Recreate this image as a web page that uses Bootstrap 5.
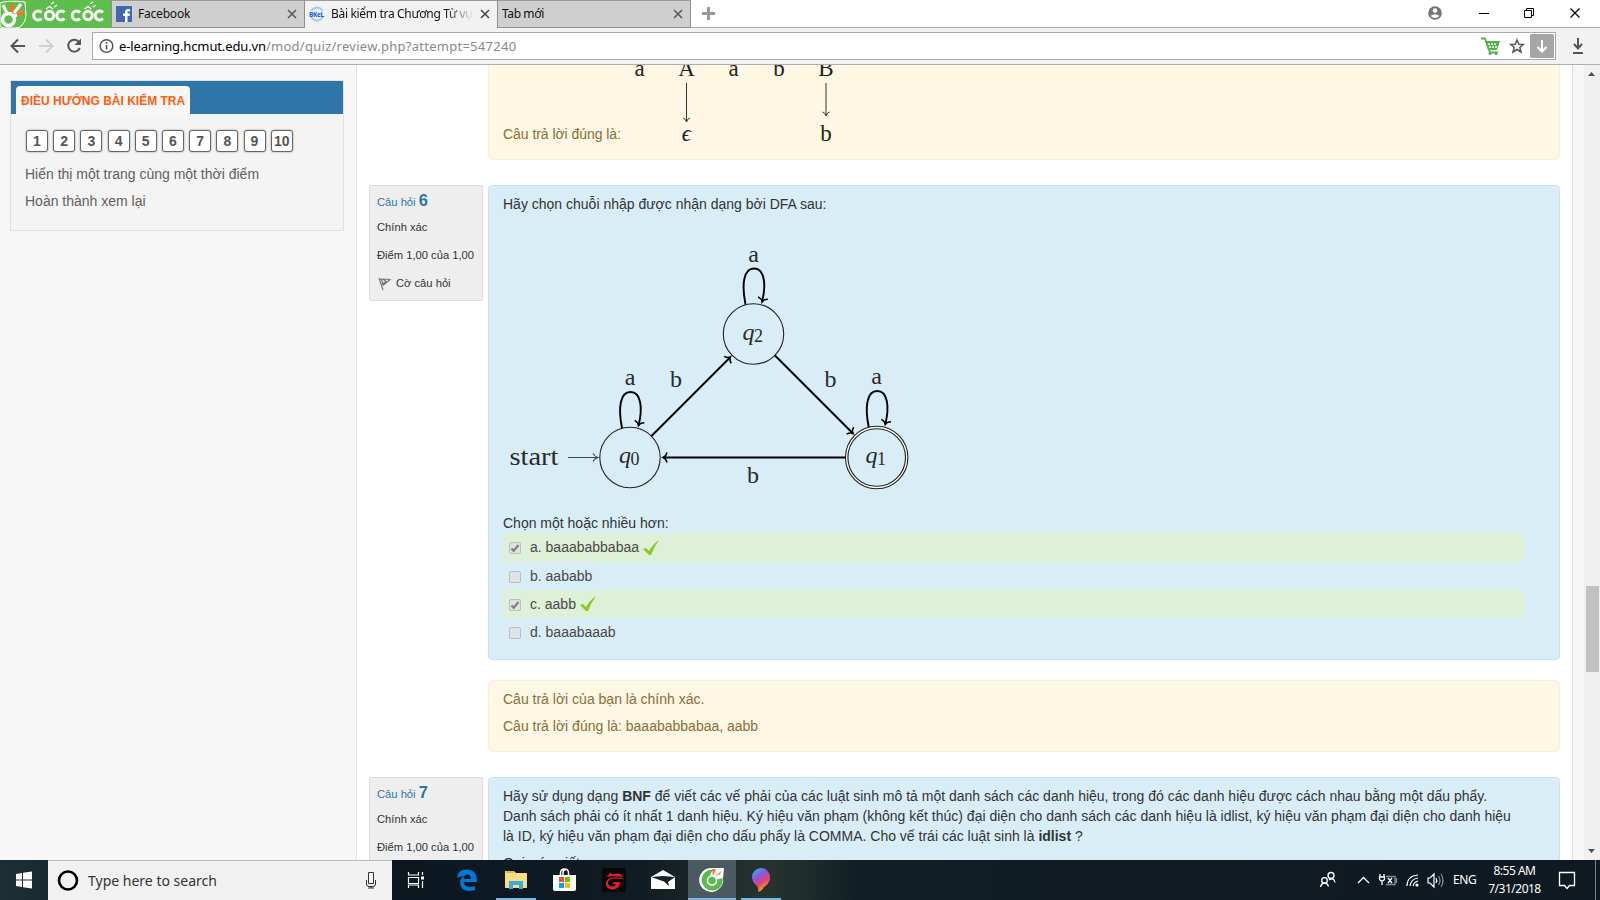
<!DOCTYPE html>
<html lang="vi">
<head>
<meta charset="utf-8">
<title>Bài kiểm tra Chương Từ vựng</title>
<link href="https://cdn.jsdelivr.net/npm/bootstrap@5.3.0/dist/css/bootstrap.min.css" rel="stylesheet">
<style>
body{width:1600px;height:900px;overflow:hidden;font:14px/20px "Liberation Sans",Arial,sans-serif;color:#333;background:#f7f7f7}
svg{display:block;flex:none}
.ui{font-family:"Noto Sans","Open Sans",sans-serif}
.tabstrip{height:28px;background:#fff;border-bottom:1px solid #b0b0b0}
.brand{width:111px;height:28px;background:#5fbd4d}
.btab{height:28px;background:#cfcfcf;border:1px solid #8e8e8e;border-top-color:#9a9a9a;font-size:12px;line-height:26px;color:#111;padding:0 5px 0 4px;letter-spacing:-.2px}
.btab.on{background:#f2f2f2;border-bottom-color:#f2f2f2;border-right:0;border-left:0}
.fade-end{-webkit-mask-image:linear-gradient(90deg,#000 80%,transparent);mask-image:linear-gradient(90deg,#000 80%,transparent)}
.toolbar{height:37px;background:#f2f2f2;border-bottom:1px solid #b0b0b0}
.urlbar{width:1464px;height:28px;background:#fff;border:1px solid #a9a9a9;font-size:13px}
.viewport{height:795px}
.side{width:356px;padding:15px 12px 0 10px}
.block{width:334px;height:151px;border:1px solid #e1e1e1;background:#f4f4f4}
.block-head{height:33px;background:#2e76a9;padding:5px 0 0 5px}
.block-tab{width:174px;height:28px;border-radius:4px 4px 0 0;background:#f7f7f7;color:#ff5d10;font-weight:bold;font-size:12px;line-height:30px;padding-left:5px;white-space:nowrap}
.qn{width:22px;height:22px;border:1px solid #666;border-radius:3px;background:#fff;color:#555;font-weight:bold;line-height:20px;box-shadow:0 0 2px #888}
.gray{color:#606060}
.main-col{width:1217px;border-left:1px solid #e1e1e1;border-right:1px solid #ddd;background:#fff;padding:0 11px 0 12px}
.info{width:114px;height:116px;border:1px solid #dcdcdc;border-radius:2px;background:#eee;font-size:11.2px;line-height:16px;padding:6px 0 0 7px;white-space:nowrap}
.info b{font-size:16.5px;line-height:16px}
.info .lnk{color:#2f75a9;height:18px}
.q,.fb{width:1072px;border:1px solid #bce8f1;border-radius:4px;background:#d9edf7;padding:8px 14px 0}
.fb{border-color:#fbeed5;background:#fdf7e4;color:#8a6d3b;margin-left:119px}
.ans{height:28px;width:1021px;padding-left:6px;color:#484848}
.ans.ok{background:#dff0d8}
.cb{width:12px;height:12px;border:1px solid #b9bfc2;border-radius:2px;background:#dde4e8;margin-right:9px;margin-top:1px}
.ok .cb{background:#dfe5dc}
.sbar{width:16px;background:#f0f0f0}
.thumb{width:13px;height:86px;background:#c1c1c1;margin:0 0 0 2px}
.taskbar{height:40px;background:linear-gradient(90deg,#1d2f34 0,#182a30 50px,#0b1822 390px,#101b23 640px,#26342f 770px,#111f25 860px,#101b22 1100px,#0e1921 1600px);color:#fff}
.search{width:344px;height:40px;background:#f1f1f1;color:#333;font-size:14px;border-top:1px solid #bbb}
.app{width:48px;height:40px;border-bottom:2px solid transparent}
.app.run{width:40px;margin:0 4px;border-color:#76b9ed}
.app.cur{background:#4b5a5f;border-color:#76b9ed}
</style>
</head>
<body class="d-flex flex-column">
<header class="ui">
 <div class="tabstrip d-flex">
  <div class="brand"><svg width="111" height="28"><path d="M0 3Q9 0 25 2L26 16Q24 28 15 28L4 28Q0 28 0 25Z" fill="none" stroke="#fff"/><circle cx="8.500" cy="19.500" r="6" fill="none" stroke="#fff" stroke-width="3.400"/><path d="M3 5l4 8" stroke="#fff" stroke-width="3"/><path d="M13 4l-2 8" stroke="#ff6f20" stroke-width="3.500"/><path d="M21 4l-7 9M23 12l-8 4" stroke="#fff" stroke-width="3"/><path d="M17 15l7-3" stroke="#ff6f20" stroke-width="3"/><g fill="none" stroke="#fff" stroke-width="2.900"><path d="M41.500 12.500a4.500 4.500 0 1 0 0 6M80 12.500a4.500 4.500 0 1 0 0 6M64.500 12.500a4.500 4.500 0 1 0 0 6M103 12.500a4.500 4.500 0 1 0 0 6"/><circle cx="49.500" cy="15.500" r="4.200"/><circle cx="88" cy="15.500" r="4.200"/></g><path d="M46 9l3.500-2.500L53 9M84.500 9L88 6.500 91.500 9M51 4l3-2M54 7l3-2M90 4l3-2M93 7l3-2" fill="none" stroke="#fff" stroke-width="1.300"/></svg></div>
  <div class="btab d-flex align-items-center" style="width:194px"><svg width="16" height="16" style="margin-right:6px"><rect width="16" height="16" fill="#4267b2"/><path d="M9 16V10H7V7.500h2V6Q9 3 12 3h2v2.400h-1.500q-1 0-1 1v1.100H14L13.600 10h-2.100v6z" fill="#fff"/></svg><span class="flex-fill ps-0">Facebook</span><svg width="14" height="14"><path d="M3 3l8 8M11 3l-8 8" stroke="#555" stroke-width="1.500"/></svg></div>
  <div class="btab on d-flex align-items-center" style="width:192px"><svg width="16" height="16" class="me-1"><circle cx="8" cy="8" r="6.500" fill="none" stroke="#a8c7f5" stroke-width="2"/><rect y="5" width="16" height="6" fill="#f2f2f2"/><text x="0" y="10.500" font-size="6.500" font-weight="bold" fill="#1955e8" textLength="15">BKeL</text></svg><span class="flex-fill overflow-hidden text-nowrap fade-end" style="width:144px;margin-left:2px;letter-spacing:-.32px">Bài kiểm tra Chương Từ vựng</span><svg width="14" height="14" class="ms-1"><path d="M3 3l8 8M11 3l-8 8" stroke="#444" stroke-width="1.500"/></svg></div>
  <div class="btab d-flex align-items-center" style="width:194px;letter-spacing:-.4px"><span class="flex-fill">Tab mới</span><svg width="14" height="14"><path d="M3 3l8 8M11 3l-8 8" stroke="#555" stroke-width="1.500"/></svg></div>
  <svg width="36" height="27"><path d="M11 13.500h13M17.500 7v13" stroke="#999" stroke-width="3"/></svg>
  <svg width="180" height="27" class="ms-auto"><circle cx="15" cy="13" r="6.800" fill="#757575"/><circle cx="15" cy="10.500" r="2.300" fill="#fff"/><path d="M10.500 16q4.500-3.500 9 0q-4.500 4-9 0" fill="#fff"/><path d="M59 13.500h10" stroke="#000"/><path d="M104.500 10.500h7v7h-7zM106.500 10.500v-2h7v7h-2" fill="none" stroke="#000"/><path d="M150.500 8.500l9 9M159.500 8.500l-9 9" stroke="#000" stroke-width="1.200"/></svg>
 </div>
 <div class="toolbar d-flex align-items-center">
  <svg width="92" height="36"><path d="M25 18H12M18 11.500L11.500 18l6.500 6.500" fill="none" stroke="#555" stroke-width="2"/><path d="M39 18H52M46 11.500l6.500 6.500-6.500 6.500" fill="none" stroke="#d0d0d0" stroke-width="2"/><path d="M79 14a6 6 0 1 0 .800 6" fill="none" stroke="#555" stroke-width="2"/><path d="M81 10.500v6.500h-6.500z" fill="#555"/></svg>
  <div class="urlbar d-flex align-items-center"><svg width="26" height="26"><circle cx="13.500" cy="13" r="6.300" fill="none" stroke="#555" stroke-width="1.500"/><path d="M13.500 12v4.500M13.500 9v1.700" stroke="#555" stroke-width="1.600"/></svg><span class="text-black" style="letter-spacing:-.13px">e-learning.hcmut.edu.vn<span style="color:#888;letter-spacing:.27px">/mod/quiz/review.php?attempt=547240</span></span>
   <svg width="80" height="26" class="ms-auto"><path d="M6 5.500h4l5 14h8" fill="none" stroke="#55b14b" stroke-width="1.800"/><path d="M10 8h15l-3 9h-9z" fill="#55b14b"/><path d="M13 11.300h9M14 14h8" stroke="#fff" stroke-width="1.400" stroke-dasharray="2 1"/><circle cx="15" cy="20.500" r="1.500" fill="#55b14b"/><circle cx="21" cy="20.500" r="1.500" fill="#55b14b"/><path d="M42 7l1.800 4.200 4.500.300-3.500 3 1.200 4.500-4-2.500-4 2.500 1.200-4.500-3.500-3 4.500-.300z" fill="none" stroke="#555" stroke-width="1.500"/><rect x="55" y="1" width="24" height="24" rx="1.500" fill="#a6a6a6"/><path d="M67 7v11M62.500 14l4.500 4.500L71.500 14" fill="none" stroke="#fff" stroke-width="2"/></svg></div>
  <svg width="40" height="36"><path d="M22 10v10M18 16l4 4.500 4-4.500M17 25h10" fill="none" stroke="#555" stroke-width="2"/></svg>
 </div>
</header>
<div class="viewport d-flex overflow-hidden">
 <aside class="side">
  <div class="block">
   <div class="block-head"><div class="block-tab">ĐIỀU HƯỚNG BÀI KIỂM TRA</div></div>
   <div class="d-flex text-center" style="padding:16px 0 0 15px;gap:5.2px"><div class="qn">1</div><div class="qn">2</div><div class="qn">3</div><div class="qn">4</div><div class="qn">5</div><div class="qn">6</div><div class="qn">7</div><div class="qn">8</div><div class="qn">9</div><div class="qn">10</div></div>
   <div class="gray" style="padding:12px 0 0 14px">Hiển thị một trang cùng một thời điểm<div style="margin-top:7px">Hoàn thành xem lại</div></div>
  </div>
 </aside>
 <main class="main-col">
  <div class="fb rounded-top-0 border-top-0 pt-0" style="height:95px;margin-bottom:25px">
   <svg width="400" height="94" viewBox="503 65 400 94" font-family="Liberation Serif" font-size="23" fill="#222" text-anchor="middle"><text x="639.500" y="75.500">a</text><text x="686.500" y="75.500">A</text><text x="733.500" y="75.500">a</text><text x="779" y="75.500">b</text><text x="826" y="75.500">B</text><text x="686.500" y="141" font-style="italic">ϵ</text><text x="826" y="141">b</text><path d="M686.500 83v38M683 118q3 1 3.500 4q.5-3 3.500-4M826 83v32M822.500 112q3 1 3.500 4q.5-3 3.500-4" fill="none" stroke="#333"/><text x="503" y="139" font-family="Liberation Sans" font-size="14" fill="#8a6d3b" text-anchor="start" textLength="118">Câu trả lời đúng là:</text></svg>
  </div>
  <section class="d-flex align-items-start" style="gap:5px;height:495px">
   <div class="info"><div class="lnk">Câu hỏi <b>6</b></div><div style="margin-top:9px">Chính xác</div><div style="margin-top:12px">Điểm 1,00 của 1,00</div><div class="d-flex" style="margin-top:12px"><svg width="19" height="16"><path d="M2 3l4 12M3 4l10 .500-7 6M4.500 4l1.500 6M6 4l3 2.500-4 3" fill="none" stroke="#777" stroke-width="1.200"/></svg>Cờ câu hỏi</div></div>
   <div class="q" style="height:475px"><div>Hãy chọn chuỗi nhập được nhận dạng bởi DFA sau:</div>
    <svg width="440" height="299" viewBox="503 214 440 299" font-family="Liberation Serif" font-size="24" fill="#2a2a2a" text-anchor="middle">
     <defs><marker id="ah" viewBox="-6 -6 8 12" markerWidth="8" markerHeight="12" markerUnits="userSpaceOnUse" orient="auto"><path d="M-4 -5Q-3 -1 0 0Q-3 1 -4 5" fill="none" stroke="#000" stroke-width="1.500"/></marker></defs>
     <g fill="none" stroke="#222" stroke-width="1.100"><circle cx="753.500" cy="334" r="30.200"/><circle cx="630" cy="457.500" r="30.200"/><circle cx="876.700" cy="457.500" r="30" stroke="#fff" stroke-width="1.800"/><circle cx="876.700" cy="457.500" r="31.200"/><circle cx="876.700" cy="457.500" r="28.800"/><path d="M568 457.500h29M593 453.500q1.500 3 5 4q-3.500 1-5 4" stroke="#444"/></g>
     <g fill="none" stroke="#000" stroke-width="1.900"><path d="M651.500 436L730.500 357" marker-end="url(#ah)"/><path d="M775 355.500L853 433.500" marker-end="url(#ah)"/><path d="M845.500 457.500H663" marker-end="url(#ah)"/><path id="loop" d="M622 428C618 408 620 392 630.500 392C641 392 643 408 638.500 425.500" marker-end="url(#ah)"/><use href="#loop" x="123.500" y="-123.500"/><use href="#loop" x="246.700" y="-1"/></g>
     <text x="753.500" y="261.500">a</text><text x="630" y="384.500">a</text><text x="876.700" y="383.500">a</text><text x="676" y="387">b</text><text x="830.500" y="387">b</text><text x="753" y="483">b</text><text x="534" y="465" font-size="25.500" textLength="49" lengthAdjust="spacingAndGlyphs">start</text>
     <text x="748.500" y="340" font-style="italic">q</text><text x="758.500" y="341.500" font-size="18">2</text>
     <text x="625" y="463" font-style="italic">q</text><text x="635" y="464.500" font-size="18">0</text><text x="871.500" y="463" font-style="italic">q</text><text x="881.500" y="464.500" font-size="18">1</text>
    </svg>
    <div>Chọn một hoặc nhiều hơn:</div>
    <div class="ans ok d-flex align-items-center" style="height:29px"><span class="cb"><svg width="10" height="10"><path d="M1.500 5.500l2.200 2.300L8.500 2" fill="none" stroke="#808080" stroke-width="2.200"/></svg></span><span style="margin-top:-1px">a. baaababbabaa</span><svg width="16" height="16" class="ms-1"><path d="M0 9l3-1 3 3Q10 4 16 0Q11 7 8 15H6Z" fill="#8cc828"/></svg></div>
    <div class="ans d-flex align-items-center"><span class="cb"></span>b. aababb</div>
    <div class="ans ok d-flex align-items-center"><span class="cb"><svg width="10" height="10"><path d="M1.500 5.500l2.200 2.300L8.500 2" fill="none" stroke="#808080" stroke-width="2.200"/></svg></span>c. aabb<svg width="16" height="16" class="ms-1"><path d="M0 9l3-1 3 3Q10 4 16 0Q11 7 8 15H6Z" fill="#8cc828"/></svg></div>
    <div class="ans d-flex align-items-center"><span class="cb"></span>d. baaabaaab</div>
   </div>
  </section>
  <div class="fb" style="height:72px;margin-bottom:25px"><div>Câu trả lời của bạn là chính xác.</div><div style="margin-top:7px">Câu trả lời đúng là: baaababbabaa, aabb</div></div>
  <section class="d-flex align-items-start" style="gap:5px">
   <div class="info"><div class="lnk">Câu hỏi <b>7</b></div><div style="margin-top:9px">Chính xác</div><div style="margin-top:12px">Điểm 1,00 của 1,00</div></div>
   <div class="q text-nowrap" style="height:200px">Hãy sử dụng dạng <b>BNF</b> để viết các vế phải của các luật sinh mô tả một danh sách các danh hiệu, trong đó các danh hiệu được cách nhau bằng một dấu phẩy.<br>Danh sách phải có ít nhất 1 danh hiệu. Ký hiệu văn phạm (không kết thúc) đại diện cho danh sách các danh hiệu là idlist, ký hiệu văn phạm đại diện cho danh hiệu<br>là ID, ký hiệu văn phạm đại diện cho dấu phẩy là COMMA. Cho vế trái các luật sinh là <b>idlist</b> ?<div style="margin-top:7px">Qui ước viết</div></div>
  </section>
 </main>
 <div class="sbar ms-auto d-flex flex-column"><svg width="16" height="521"><path d="M4 11h7L7.500 7z" fill="#505050"/></svg><div class="thumb"></div><svg width="16" height="20" class="mt-auto"><path d="M4 9h7l-3.500 4z" fill="#505050"/></svg></div>
</div>
<footer class="taskbar ui d-flex">
 <svg width="48" height="40"><path d="M16 14l6-1v6.500h-6zM23 12.800l9-1.300v8h-9zM16 20.500h6V27l-6-1zM23 20.500h9v8l-9-1.300z" fill="#fff"/></svg>
 <div class="search d-flex align-items-center"><svg width="40" height="40"><circle cx="20" cy="19.500" r="9" fill="none" stroke="#000" stroke-width="2.600"/></svg><span>Type here to search</span><svg width="40" height="40" class="ms-auto"><path d="M16.500 11.500h5v11h-5zM14.500 19v4q0 2.500 2.500 2.500h4q2.500 0 2.500-2.500v-4M19 25v2M16 27h6" fill="none" stroke="#333"/></svg></div>
 <div class="app"><svg width="48" height="40"><path d="M16.500 12v3h10v-3M16.500 17.500h10v6h-10zM16.500 28v-3h10v3M30.500 12v3M30.500 21v7" fill="none" stroke="#fff" stroke-width="1.200"/><rect x="29" y="16.500" width="3" height="3" fill="#fff"/></svg></div>
 <div class="app" style="margin:0 1px 0 3px"><svg width="48" height="40"><path d="M14 18Q15 9 24 9.500Q34 10 34 22H20.500Q22 29 32 26V30Q18 34 17 22Q17.500 18 21 16Q17 16 14 18ZM20.500 19H28Q27.500 14 24 14.500Q21 15 20.500 19Z" fill="#0078d7" fill-rule="evenodd"/></svg></div>
 <div class="app run"><svg width="40" height="38"><path d="M9 11h9l2 2h11v15H9z" fill="#f8dc82"/><path d="M10 11h8v2h-8z" fill="#e8b828"/><path d="M13 29v-8h14v8h-4v-4h-6v4z" fill="#38aee0"/></svg></div>
 <div class="app"><svg width="48" height="40"><path d="M13 15h23v14q0 2-2 2H15q-2 0-2-2z" fill="#fff"/><path d="M20.500 15v-2q0-4 4-4t4 4v2M23 15v-3q0-2 3-2.500" fill="none" stroke="#fff" stroke-width="1.500"/><path fill="#f25022" d="M19 17h5v5h-5z"/><path fill="#7fba00" d="M25 17h5v5h-5z"/><path fill="#00a4ef" d="M19 23h5v5h-5z"/><path fill="#ffb900" d="M25 23h5v5h-5z"/></svg></div>
 <div class="app"><svg width="48" height="40"><rect x="14" y="8" width="24" height="24" rx="2" fill="#070809"/><path d="M17 16q4 0 5-4q1 3 5 2q5-2 8 3l-5-.5q-6-.5-10 0zM20 19q6-3 14-1l2 1.500q-8-2-14 0q-2 1-2 4q1 3 5 3q2 0 3-2.500h-4l2-2h6q0 7-7 7.500q-6 0-7-5q0-3 2-5.500z" fill="#e22028"/></svg></div>
 <div class="app"><svg width="48" height="40"><path d="M15 17l12-7 12 7v12H15z" fill="#fff"/><path d="M15 17l12-1 12 1-7 5 1 4-5-4.500z" fill="#14212a"/></svg></div>
 <div class="app cur" style="margin-left:4px"><svg width="48" height="38"><path d="M24 8A12 12 0 1 0 35 18L36 8Z" fill="#fff"/><path d="M25 9.500A10.500 10.500 0 1 0 34.500 18L27 20L22 15Z" fill="#5bb950"/><circle cx="24" cy="20.500" r="4.500" fill="#5bb950" stroke="#fff" stroke-width="1.500"/><path d="M24 9h4l-3 7zM34 10l-2 4-5 3z" fill="#ff7320"/></svg></div>
 <div class="app run" style="margin-left:5px"><svg width="40" height="38"><defs><linearGradient id="pg" x1="0" y1="0" x2=".5" y2="1"><stop offset="0" stop-color="#19c8f4"/><stop offset=".4" stop-color="#8659df"/><stop offset=".7" stop-color="#e63d7c"/><stop offset="1" stop-color="#ffb000"/></linearGradient></defs><path d="M11 17a9 9 0 0 1 18 0q0 6-6 10-2 4-6 5q1-4-1-6-5-4-5-9" fill="url(#pg)"/></svg></div>
 <svg width="94" height="40" class="ms-auto"><g fill="none" stroke="#fff" stroke-width="1.300"><circle cx="22" cy="15.500" r="3"/><circle cx="15.500" cy="20.500" r="2.800"/><path d="M11.500 27q1-4 4-4t4 3.500M20 20q5-3 6 2.500"/><path d="M49 23l5.500-5.500L60 23"/><path d="M71 14v3M75 14v3M70.500 17h5v2q-.5 2-2.500 2t-2.500-2zM73 21v4M79 18l4 5M83 18l-4 5"/><path d="M77 16.500h9v8h-9M87.500 18v5" opacity=".5"/></g></svg>
 <svg width="48" height="40"><g fill="none" stroke="#fff" stroke-width="1.200"><path d="M4 26Q4 16 15 15M7 26Q8 19 15 18M10 26Q11 22 15 21"/><circle cx="14" cy="25" r="1" fill="#fff"/><path d="M25 18h2l4-4v13l-4-4h-2zM33 18q1.500 2.500 0 5"/><path d="M35.500 16q3 4.500 0 9M38 14q4 6.500 0 13" opacity=".5"/></g></svg>
 <span style="width:33px;font-size:12px;line-height:39px;margin-left:2px;letter-spacing:-.4px">ENG</span>
 <div class="text-center" style="width:58px;font-size:12px;line-height:18px;padding:2px 1px 0 0;letter-spacing:-.5px">8:55 AM<br>7/31/2018</div>
 <svg width="56" height="40"><path d="M15.500 12.500h15v13h-5l-2.500 3-2.500-3h-5z" fill="none" stroke="#fff" stroke-width="1.300"/><path d="M51.500 0v40" stroke="#77838a"/></svg>
</footer>
<script src="https://cdn.jsdelivr.net/npm/bootstrap@5.3.0/dist/js/bootstrap.bundle.min.js"></script>
</body>
</html>
